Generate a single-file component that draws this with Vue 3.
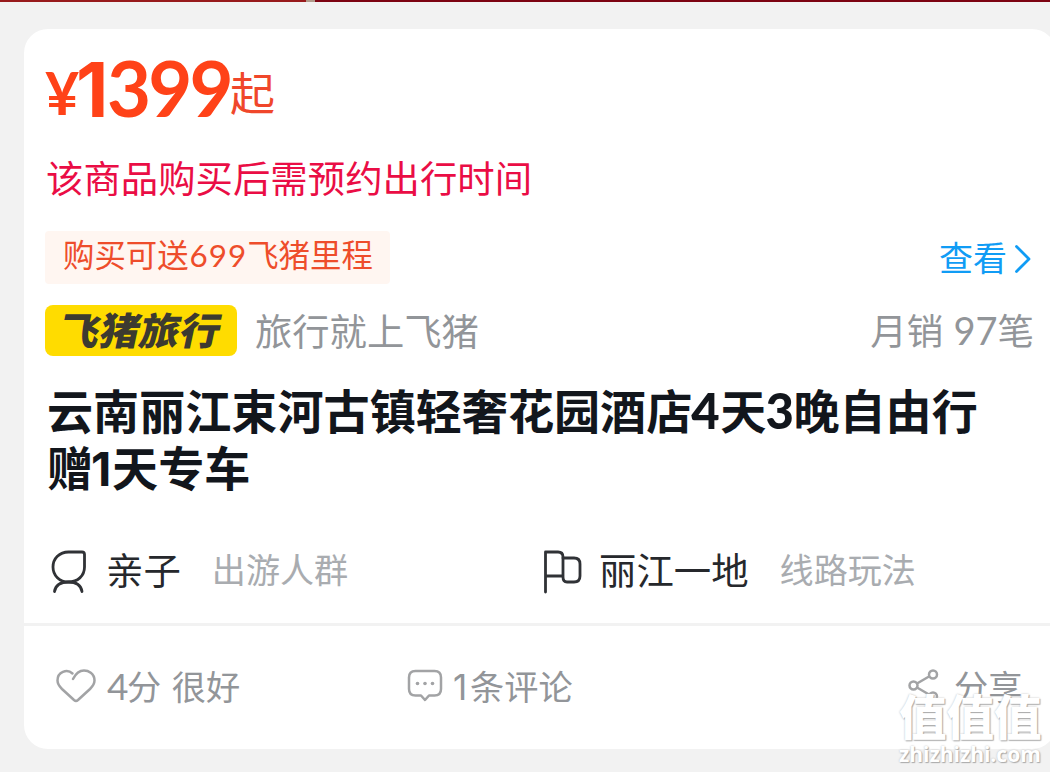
<template>
  <div class="page">
    <!-- 顶部头图底边 -->
    <div class="banner-edge">
      <span class="edge-left"></span>
      <span class="edge-mark"></span>
      <span class="edge-right"></span>
    </div>

    <div class="goods-card">
      <!-- 价格 -->
      <div class="price-row">
        <span class="price-symbol">¥</span>
        <span class="price-num"><i class="one">1</i>399</span>
        <span class="price-suffix">起</span>
      </div>

      <div class="notice">该商品购买后需预约出行时间</div>

      <!-- 里程 -->
      <div class="mileage-row">
        <div class="mileage-tag">购买可送<span class="num">699</span>飞猪里程</div>
        <div class="view-link">
          <span>查看</span>
          <svg class="arrow" viewBox="0 0 18 30">
            <path d="M2.500 2.500 L15 15 L2.500 27.500" />
          </svg>
        </div>
      </div>

      <!-- 品牌与销量 -->
      <div class="brand-row">
        <div class="brand-logo"><span>飞猪旅行</span></div>
        <div class="slogan">旅行就上飞猪</div>
        <div class="sales">月销 <span class="num">97</span>笔</div>
      </div>

      <h1 class="title">
        <span>云南丽江束河古镇轻奢花园酒店<b class="d4">4</b>天<b class="d3">3</b>晚自由行</span>
        <span>赠<b class="d1">1</b>天专车</span>
      </h1>

      <!-- 商品属性 -->
      <div class="attr-row">
        <div v-for="item in attrs" :key="item.label" class="attr">
          <svg v-if="item.icon === 'people'" class="attr-icon" viewBox="0 0 42 46">
            <path d="M19.5 3 H33 Q35.500 3 35.500 5.500 V18 C35.500 27 28.500 33 19.500 33 C10.500 33 4 26.500 4 18 C4 9.500 10.500 3 19.500 3 Z" />
            <path d="M5.500 42.500 C6.500 36.500 11 33 19.500 33 C28 33 32 36.500 33 42.500" />
          </svg>
          <svg v-else class="attr-icon" viewBox="0 0 42 46">
            <path d="M3.500 43 V3 H16 Q21 3 21 8 V27 H3.500" />
            <path d="M21 9 H32 Q38 9 38 15 V27 Q38 33 32 33 H25 Q21 33 21 28" />
          </svg>
          <span class="attr-value">{{ item.value }}</span>
          <span class="attr-label">{{ item.label }}</span>
        </div>
      </div>

      <!-- 底部操作 -->
      <div class="action-row">
        <div class="action like">
          <svg class="heart" viewBox="0 0 42 36">
            <path d="M17.500 5.500 C12 0.500 2.500 4 2.500 12.500 C2.500 16 4.500 18.500 7 21 L19 32 Q21 33.700 23 32 L35 21 C38 18 39.500 16 39.500 12.500 C39.500 5 33 2.500 29 2.500 C24 2.500 20.500 6 18 11" />
          </svg>
          <span><i class="num">4</i>分 很好</span>
        </div>
        <div class="action comment">
          <svg class="bubble" viewBox="0 0 36 34">
            <path d="M8.500 2 H27.500 Q34 2 34 8.500 V20 Q34 26.500 27.500 26.500 H22 L18 31 L14 26.500 H8.500 Q2 26.500 2 20 V8.500 Q2 2 8.500 2 Z" />
            <circle cx="10.500" cy="14.500" r="1.800" />
            <circle cx="18" cy="14.500" r="1.800" />
            <circle cx="25.500" cy="14.500" r="1.800" />
          </svg>
          <span><i class="num">1</i>条评论</span>
        </div>
        <div class="action share">
          <svg class="share-icon" viewBox="0 0 32 34">
            <path d="M9 14.500 L21 7.500 M9 18.500 L21 25.500" />
            <circle cx="5.500" cy="16.500" r="4" />
            <circle cx="25" cy="5.500" r="4" />
            <circle cx="25" cy="27.500" r="4" />
          </svg>
          <span>分享</span>
        </div>
      </div>
    </div>

    <!-- 水印 -->
    <div class="watermark">
      <div class="wm-name">值值值</div>
      <div class="wm-site">zhizhizhi.com</div>
    </div>
  </div>
</template>

<script setup>
import { ref } from 'vue'

const attrs = ref([
  { icon: 'people', value: '亲子', label: '出游人群' },
  { icon: 'flag', value: '丽江一地', label: '线路玩法' },
])
</script>

<style>
body { margin: 0; overflow: hidden; }
</style>

<style scoped>
.page { position: relative; width: 1050px; height: 772px; overflow: hidden; background: #f2f2f2; font-family: "Noto Sans CJK SC", sans-serif; white-space: nowrap; }
i { font-style: normal; }
svg { flex-shrink: 0; fill: none; stroke-linecap: round; stroke-linejoin: round; }

.banner-edge { display: flex; height: 2px; margin-bottom: 27px; }
.edge-left { width: 306px; background: #981a1c; }
.edge-mark { width: 9px; background: #b09a8a; }
.edge-right { flex: 1; background: #7d0312; }

.goods-card { box-sizing: border-box; width: 1032px; height: 720px; margin-left: 24px; background: #fff; border-radius: 24px; }

.price-row { display: flex; align-items: baseline; height: 117px; padding-left: 21px; line-height: 117px; color: #ff4218; }
.price-symbol { position: relative; top: -2px; width: 34px; font-family: Lato, sans-serif; font-size: 59px; font-weight: 700; }
.price-num { width: 151px; font-family: Lato, sans-serif; font-size: 76px; font-weight: 700; letter-spacing: -2.800px; }
.price-num .one { display: inline-block; width: 28px; font-family: Inter, sans-serif; font-size: 75px; line-height: 77px; text-indent: -3px; }
.price-suffix { position: relative; top: -6px; font-size: 45px; font-weight: 400; color: #f0472b; }

.notice { height: 56px; margin-top: 3px; padding-left: 22px; line-height: 56px; font-size: 37.4px; color: #ea0d45; }

.mileage-row { display: flex; justify-content: space-between; height: 53px; margin-top: 26px; padding: 0 24px 0 21px; }
.mileage-tag { box-sizing: border-box; width: 345px; height: 53px; padding-left: 18px; border-radius: 4px; background: #fff6f1; line-height: 46px; font-size: 31.4px; color: #ee4d2b; }
.mileage-tag .num { margin-left: 1px; font-family: Lato, sans-serif; letter-spacing: 1px; }
.view-link { display: flex; align-items: center; height: 53px; line-height: 53px; font-size: 34px; color: #109cf5; }
.view-link span { margin-top: -3px; }
.arrow { width: 18px; height: 30px; margin: 2px 0 0 7px; stroke: #109cf5; stroke-width: 2.8; }

.brand-row { display: flex; align-items: center; height: 51px; margin-top: 21px; padding: 0 22px 0 21px; }
.brand-logo { display: flex; align-items: center; justify-content: center; width: 192px; height: 51px; border-radius: 8px; background: #ffdc00; font-size: 38px; font-weight: 900; line-height: 45px; color: #3c3a30; }
.brand-logo span { margin-top: -4px; transform: skewX(-12deg) scaleX(1.06); }
.slogan { margin: -2px 0 0 18px; font-size: 37.3px; line-height: 48px; color: #929599; }
.sales { margin: -1px 0 0 auto; font-size: 36.5px; line-height: 48px; color: #929599; }
.sales .num { margin-left: 2px; font-family: Lato, sans-serif; font-size: 38px; }

.title { display: flex; flex-direction: column; margin: 25px 0 0; padding-left: 23px; font-size: 46.1px; font-weight: 700; line-height: 57px; color: #12161c; }
.title b { display: inline-block; font-family: Lato, sans-serif; font-size: 49px; line-height: 49px; font-weight: 900; }
.title .d4 { width: 28px; text-indent: -1px; }
.title .d3 { width: 27px; text-indent: -1px; }
.title .d1 { width: 19px; font-family: Inter, sans-serif; font-size: 47px; font-weight: 700; text-indent: -2px; }

.attr-row { display: flex; height: 50px; margin-top: 51px; }
.attr { display: flex; align-items: center; width: 468px; padding-left: 25px; line-height: 46px; }
.attr-icon { width: 42px; height: 46px; margin-top: 2px; stroke: #303236; stroke-width: 2.8; }
.attr-value { margin: -4px 0 0 15px; font-size: 37.4px; color: #26282c; }
.attr-label { margin: -6px 0 0 31px; font-size: 34.1px; line-height: 44px; color: #a9acb0; }

.action-row { display: flex; align-items: center; height: 120px; margin-top: 27px; border-top: 3px solid #f2f2f2; font-size: 34.2px; line-height: 50px; color: #929599; }
.action { display: flex; align-items: center; }
.action svg { stroke: #a2a3a5; stroke-width: 2.5; }
.action .num { display: inline-block; font-family: Lato, sans-serif; font-size: 37px; }
.like { box-sizing: border-box; width: 383px; padding-left: 31px; word-spacing: 3px; }
.like span { margin-top: -2px; }
.heart { width: 42px; height: 36px; margin-right: 10px; }
.like .num { width: 20px; }
.comment { width: 501px; }
.comment span { margin-top: -1px; }
.bubble { width: 36px; height: 34px; margin-right: 12px; }
.comment .num { width: 15px; font-family: Inter, sans-serif; font-size: 35px; font-weight: 400; text-indent: -2px; }
.bubble circle { fill: #a2a3a5; stroke: none; }
.share-icon { width: 32px; height: 34px; margin-right: 14px; }
.share span { margin-top: -2px; }

/* 水印浮于卡片之上 */
.watermark { position: absolute; left: 899px; top: 687px; color: #fff; text-shadow: 1px 1px 1px #aaa, 0 0 2px #bbb; }
.wm-name { font-size: 47.5px; font-weight: 900; line-height: 55px; }
.wm-site { font-family: "Open Sans", sans-serif; font-size: 21px; font-weight: 700; line-height: 24px; }
</style>
